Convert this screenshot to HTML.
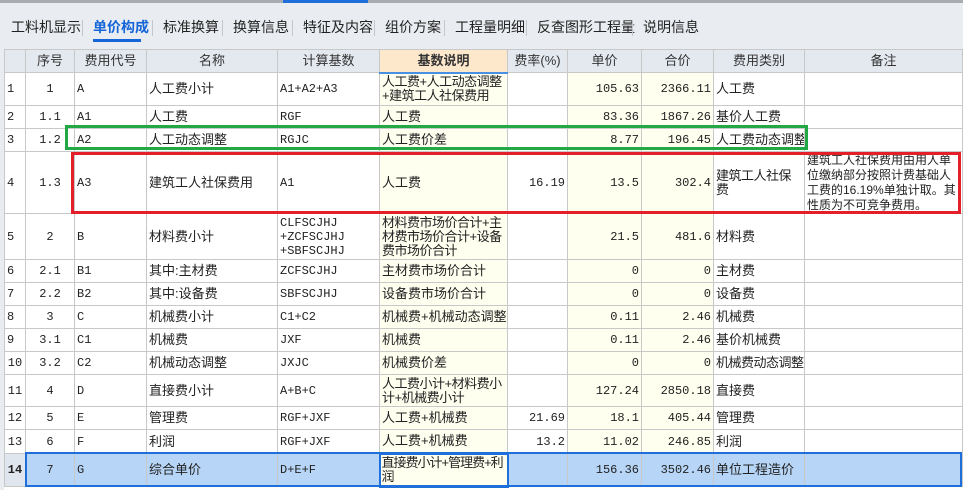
<!DOCTYPE html>
<html><head><meta charset="utf-8"><style>
*{margin:0;padding:0;box-sizing:border-box}
body{width:963px;height:490px;overflow:hidden;background:#fff;font-family:"Liberation Sans","Noto Sans CJK SC",sans-serif;font-size:13px;color:#222;position:relative}
.top{position:absolute;left:0;top:0;width:963px;height:49px;background:#e9edf1;border-top:3px solid #a9adb2}
.top .bl{position:absolute;left:283px;top:-3px;width:85px;height:3px;background:#1e6fd9}
.tab{position:absolute;top:14px;font-size:14px;color:#222}
.sep{position:absolute;top:17px;width:1px;height:16px;background:#c4c8cc}
.ul{position:absolute;left:93px;top:36px;width:48px;height:3px;background:#1565d8}
table{position:absolute;left:4px;top:49px;border-collapse:collapse;table-layout:fixed;width:958px}
td{border:1px solid #c8c8c8;padding:0 2px;white-space:nowrap;overflow:hidden;line-height:14px;vertical-align:middle}
td>div{overflow:hidden}
td.n{font-family:"Liberation Mono",monospace;font-size:12px}
td.c{text-align:center}td.r{text-align:right;font-family:"Liberation Mono",monospace;font-size:12px}
td.w{white-space:normal;letter-spacing:-0.5px;line-height:14px}
td.y{background:#fffff0}
tr.h td{background:#e4e9f0;text-align:center;font-size:13px;color:#333}
tr.h td.hy{background:#fde8cc;font-weight:bold;border-bottom:2px solid #4a90e2}
tr.s td{background:#b7d6f7}
tr.s td.sel{background:#fffff0;border:2px solid #1e6fd9}
.box{position:absolute;border:3px solid}
.lm{position:absolute;left:0;top:49px;width:4px;height:441px;background:#e9edf1}
</style></head><body>
<div class="top"><div class="bl"></div>
<span class="tab" style="left:11px">工料机显示</span><div class="sep" style="left:82px"></div>
<span class="tab" style="left:93px;color:#1565d8;font-weight:bold">单价构成</span><div class="sep" style="left:152px"></div>
<span class="tab" style="left:163px">标准换算</span><div class="sep" style="left:222px"></div>
<span class="tab" style="left:233px">换算信息</span><div class="sep" style="left:292px"></div>
<span class="tab" style="left:303px">特征及内容</span><div class="sep" style="left:374px"></div>
<span class="tab" style="left:385px">组价方案</span><div class="sep" style="left:444px"></div>
<span class="tab" style="left:455px">工程量明细</span><div class="sep" style="left:526px"></div>
<span class="tab" style="left:537px">反查图形工程量</span><div class="sep" style="left:632px"></div>
<span class="tab" style="left:643px">说明信息</span>
<div class="ul"></div></div>
<div class="lm"></div>
<table>
<colgroup><col style="width:21px"><col style="width:49px"><col style="width:72px"><col style="width:131px"><col style="width:102px"><col style="width:128px"><col style="width:60px"><col style="width:74px"><col style="width:72px"><col style="width:91px"><col style="width:158px"></colgroup>
<tr class="h" style="height:23px"><td></td><td>序号</td><td>费用代号</td><td>名称</td><td>计算基数</td><td class="hy">基数说明</td><td>费率(%)</td><td>单价</td><td>合价</td><td>费用类别</td><td>备注</td></tr>
<tr style="height:33px"><td class="n">1</td><td class="c n">1</td><td class="n">A</td><td>人工费小计</td><td class="n">A1+A2+A3</td><td class="y w"><div style="height:29px">人工费+人工动态调整<br>+建筑工人社保费用</div></td><td></td><td class="r y">105.63</td><td class="r y">2366.11</td><td>人工费</td><td></td></tr>
<tr style="height:23px"><td class="n">2</td><td class="c n">1.1</td><td class="n">A1</td><td>人工费</td><td class="n">RGF</td><td class="y">人工费</td><td></td><td class="r y">83.36</td><td class="r y">1867.26</td><td>基价人工费</td><td></td></tr>
<tr style="height:23px"><td class="n">3</td><td class="c n">1.2</td><td class="n">A2</td><td>人工动态调整</td><td class="n">RGJC</td><td class="y">人工费价差</td><td></td><td class="r y">8.77</td><td class="r y">196.45</td><td>人工费动态调整</td><td></td></tr>
<tr style="height:62px"><td class="n">4</td><td class="c n">1.3</td><td class="n">A3</td><td>建筑工人社保费用</td><td class="n">A1</td><td class="y">人工费</td><td class="r">16.19</td><td class="r y">13.5</td><td class="r y">302.4</td><td class="w"><div style="height:28px">建筑工人社保费<br>用</div></td><td class="w" style="vertical-align:top;padding-top:1px;font-size:12px;letter-spacing:0;line-height:15px"><div style="height:60px">建筑工人社保费用由用人单<br>位缴纳部分按照计费基础人<br>工费的16.19%单独计取。其<br>性质为不可竞争费用。</div></td></tr>
<tr style="height:46px"><td class="n">5</td><td class="c n">2</td><td class="n">B</td><td>材料费小计</td><td class="n"><div style="height:42px">CLFSCJHJ<br>+ZCFSCJHJ<br>+SBFSCJHJ</div></td><td class="y w"><div style="height:42px">材料费市场价合计+主<br>材费市场价合计+设备<br>费市场价合计</div></td><td></td><td class="r y">21.5</td><td class="r y">481.6</td><td>材料费</td><td></td></tr>
<tr style="height:23px"><td class="n">6</td><td class="c n">2.1</td><td class="n">B1</td><td>其中:主材费</td><td class="n">ZCFSCJHJ</td><td class="y">主材费市场价合计</td><td></td><td class="r y">0</td><td class="r y">0</td><td>主材费</td><td></td></tr>
<tr style="height:23px"><td class="n">7</td><td class="c n">2.2</td><td class="n">B2</td><td>其中:设备费</td><td class="n">SBFSCJHJ</td><td class="y">设备费市场价合计</td><td></td><td class="r y">0</td><td class="r y">0</td><td>设备费</td><td></td></tr>
<tr style="height:23px"><td class="n">8</td><td class="c n">3</td><td class="n">C</td><td>机械费小计</td><td class="n">C1+C2</td><td class="y">机械费+机械动态调整</td><td></td><td class="r y">0.11</td><td class="r y">2.46</td><td>机械费</td><td></td></tr>
<tr style="height:23px"><td class="n">9</td><td class="c n">3.1</td><td class="n">C1</td><td>机械费</td><td class="n">JXF</td><td class="y">机械费</td><td></td><td class="r y">0.11</td><td class="r y">2.46</td><td>基价机械费</td><td></td></tr>
<tr style="height:23px"><td class="n" style="padding:0;text-align:center">10</td><td class="c n">3.2</td><td class="n">C2</td><td>机械动态调整</td><td class="n">JXJC</td><td class="y">机械费价差</td><td></td><td class="r y">0</td><td class="r y">0</td><td style="letter-spacing:-0.5px">机械费动态调整</td><td></td></tr>
<tr style="height:32px"><td class="n" style="padding:0;text-align:center">11</td><td class="c n">4</td><td class="n">D</td><td>直接费小计</td><td class="n">A+B+C</td><td class="y w"><div style="height:28px">人工费小计+材料费小<br>计+机械费小计</div></td><td></td><td class="r y">127.24</td><td class="r y">2850.18</td><td>直接费</td><td></td></tr>
<tr style="height:23px"><td class="n" style="padding:0;text-align:center">12</td><td class="c n">5</td><td class="n">E</td><td>管理费</td><td class="n">RGF+JXF</td><td class="y">人工费+机械费</td><td class="r">21.69</td><td class="r y">18.1</td><td class="r y">405.44</td><td>管理费</td><td></td></tr>
<tr style="height:24px"><td class="n" style="padding:0;text-align:center">13</td><td class="c n">6</td><td class="n">F</td><td>利润</td><td class="n">RGF+JXF</td><td class="y">人工费+机械费</td><td class="r">13.2</td><td class="r y">11.02</td><td class="r y">246.85</td><td>利润</td><td></td></tr>
<tr class="s" style="height:33px"><td class="n" style="font-weight:bold;background:#dfe6ee;padding:0;text-align:center">14</td><td class="c n">7</td><td class="n">G</td><td>综合单价</td><td class="n">D+E+F</td><td class="sel w" style="letter-spacing:-1px;padding:0 1px"><div style="height:28px">直接费小计+管理费+利<br>润</div></td><td></td><td class="r">156.36</td><td class="r">3502.46</td><td>单位工程造价</td><td></td></tr>
</table>
<div class="box" style="left:25px;top:452px;width:937px;height:35px;border-color:#1e6fd9;border-width:2px"></div>
<div class="box" style="left:65px;top:125px;width:743px;height:25px;border-color:#22a844"></div>
<div class="box" style="left:71px;top:152px;width:890px;height:62px;border-color:#e3202a"></div>
</body></html>
